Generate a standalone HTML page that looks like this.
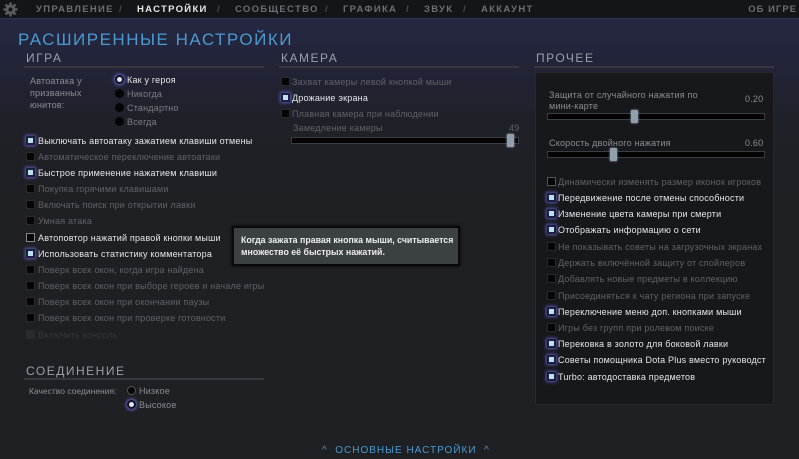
<!DOCTYPE html>
<html><head><meta charset="utf-8"><style>
*{margin:0;padding:0;box-sizing:border-box}
body{width:799px;height:459px;overflow:hidden;position:relative;font-family:"Liberation Sans","DejaVu Sans",sans-serif;background:linear-gradient(#262842 19px,#22243a 60px,#1f2128 120px,#1e2024 200px);color:#ccc}
.a{position:absolute;white-space:nowrap}
.top{position:absolute;left:0;top:0;width:799px;height:19px;background:#141518;border-bottom:1px solid #2e3550}
.nav{font-size:9.5px;letter-spacing:1.3px;color:#6b6e72;top:4px;font-weight:bold}
.sl{color:#4a4c50}
h2{position:absolute;font-weight:normal;letter-spacing:1.5px;color:#9aa0a8;font-size:12px}
.ln{position:absolute;height:2px;background:#34373c}
.cb{position:absolute;width:9px;height:9px;background:#050505;border:1px solid #2a2a2a}
.cb.on{background:#bfe0e8;border:2px solid #1c2040;box-shadow:0 0 3px 1px #5a5ab0}
.t{position:absolute;font-size:9px;letter-spacing:.2px;white-space:nowrap;color:#5f6266}
.t.w{color:#e4e6e8}
.t.m{color:#8a8d92}
.rd{position:absolute;width:9px;height:9px;border-radius:50%;background:#050505}
.rd.on{background:#dfe4f0;border:2px solid #101020;box-shadow:0 0 3px 1px #6a6ad0}
.sl2{position:absolute;height:7px;background:#030303;border:1px solid #3a3d42}
.kn{position:absolute;width:7px;height:13px;background:#8fa0ac;border-radius:1px;box-shadow:0 0 2px #aac}
</style></head><body>
<div class="top"></div>
<svg class="a" style="left:3px;top:2px" width="15" height="15" viewBox="0 0 15 15"><circle cx="7.5" cy="7.5" r="5" fill="#5a5c60"/><g stroke="#5a5c60" stroke-width="2.5"><line x1="7.5" y1="0.5" x2="7.5" y2="14.5"/><line x1="0.5" y1="7.5" x2="14.5" y2="7.5"/><line x1="2.5" y1="2.5" x2="12.5" y2="12.5"/><line x1="12.5" y1="2.5" x2="2.5" y2="12.5"/></g><circle cx="7.5" cy="7.5" r="2" fill="#141518"/></svg>
<div class="a nav" style="left:36px">УПРАВЛЕНИЕ</div>
<div class="a nav sl" style="left:119px">/</div>
<div class="a nav" style="left:137px;color:#e8e8e8">НАСТРОЙКИ</div>
<div class="a nav sl" style="left:217px">/</div>
<div class="a nav" style="left:235px">СООБЩЕСТВО</div>
<div class="a nav sl" style="left:325px">/</div>
<div class="a nav" style="left:343px">ГРАФИКА</div>
<div class="a nav sl" style="left:406px">/</div>
<div class="a nav" style="left:424px">ЗВУК</div>
<div class="a nav sl" style="left:463px">/</div>
<div class="a nav" style="left:481px">АККАУНТ</div>
<div class="a nav" style="right:2px;letter-spacing:1px">ОБ ИГРЕ</div>

<div class="a" style="left:18px;top:30px;font-size:17px;letter-spacing:1.5px;color:#4a9ad0">РАСШИРЕННЫЕ НАСТРОЙКИ</div>
<h2 style="left:26px;top:51px">ИГРА</h2><div class="ln" style="left:24px;top:66px;width:240px"></div>
<h2 style="left:281px;top:51px">КАМЕРА</h2><div class="ln" style="left:279px;top:66px;width:240px"></div>
<h2 style="left:536px;top:51px">ПРОЧЕЕ</h2><div class="ln" style="left:534px;top:66px;width:240px"></div>

<div class="t m" style="left:30px;top:75px;line-height:12px;white-space:normal;width:70px">Автоатака у призванных юнитов:</div>
<div class="rd on" style="left:115px;top:75px"></div><div class="t w" style="left:127px;top:75px">Как у героя</div>
<div class="rd" style="left:115px;top:89px"></div><div class="t" style="left:127px;top:89px;color:#7a7d82">Никогда</div>
<div class="rd" style="left:115px;top:103px"></div><div class="t" style="left:127px;top:103px;color:#7a7d82">Стандартно</div>
<div class="rd" style="left:115px;top:117px"></div><div class="t" style="left:127px;top:117px;color:#7a7d82">Всегда</div>

<div class="cb on" style="left:26px;top:136px"></div><div class="t w" style="left:38px;top:136px">Выключать автоатаку зажатием клавиши отмены</div>
<div class="cb" style="left:26px;top:152px"></div><div class="t" style="left:38px;top:152px">Автоматическое переключение автоатаки</div>
<div class="cb on" style="left:26px;top:168px"></div><div class="t w" style="left:38px;top:168px">Быстрое применение нажатием клавиши</div>
<div class="cb" style="left:26px;top:184px"></div><div class="t" style="left:38px;top:184px">Покупка горячими клавишами</div>
<div class="cb" style="left:26px;top:200px"></div><div class="t" style="left:38px;top:200px">Включать поиск при открытии лавки</div>
<div class="cb" style="left:26px;top:216px"></div><div class="t" style="left:38px;top:216px">Умная атака</div>
<div class="cb" style="left:26px;top:233px;border-color:#888"></div><div class="t w" style="left:38px;top:233px">Автоповтор нажатий правой кнопки мыши</div>
<div class="cb on" style="left:26px;top:249px"></div><div class="t w" style="left:38px;top:249px">Использовать статистику комментатора</div>
<div class="cb" style="left:26px;top:265px"></div><div class="t" style="left:38px;top:265px">Поверх всех окон, когда игра найдена</div>
<div class="cb" style="left:26px;top:281px"></div><div class="t" style="left:38px;top:281px">Поверх всех окон при выборе героев и начале игры</div>
<div class="cb" style="left:26px;top:297px"></div><div class="t" style="left:38px;top:297px">Поверх всех окон при окончании паузы</div>
<div class="cb" style="left:26px;top:313px"></div><div class="t" style="left:38px;top:313px">Поверх всех окон при проверке готовности</div>
<div class="cb" style="left:26px;top:330px;background:#2a2b2e"></div><div class="t" style="left:38px;top:330px;color:#35373a">Включить консоль</div>

<h2 style="left:26px;top:364px">СОЕДИНЕНИЕ</h2><div class="ln" style="left:24px;top:378px;width:240px"></div>
<div class="t m" style="left:29px;top:386px;font-size:8.5px;letter-spacing:0">Качество соединения:</div>
<div class="rd" style="left:127px;top:386px;border:1px solid #555"></div><div class="t m" style="left:139px;top:386px">Низкое</div>
<div class="rd on" style="left:127px;top:400px"></div><div class="t m" style="left:139px;top:400px">Высокое</div>

<div class="cb" style="left:281px;top:77px"></div><div class="t" style="left:292px;top:77px">Захват камеры левой кнопкой мыши</div>
<div class="cb on" style="left:281px;top:93px"></div><div class="t w" style="left:292px;top:93px">Дрожание экрана</div>
<div class="cb" style="left:281px;top:109px"></div><div class="t" style="left:292px;top:109px">Плавная камера при наблюдении</div>
<div class="t" style="left:293px;top:123px">Замедление камеры</div>
<div class="t" style="left:509px;top:123px">49</div>
<div class="sl2" style="left:291px;top:137px;width:228px"></div>
<div class="kn" style="left:507px;top:134px"></div>

<div class="a" style="left:535px;top:72px;width:239px;height:333px;background:#17181b;border:1px solid #26282c"></div>
<div class="t m" style="left:549px;top:90px;width:175px;white-space:normal;line-height:11px">Защита от случайного нажатия по мини-карте</div>
<div class="t m" style="left:745px;top:94px">0.20</div>
<div class="sl2" style="left:547px;top:113px;width:218px"></div>
<div class="kn" style="left:631px;top:110px"></div>
<div class="t m" style="left:549px;top:138px">Скорость двойного нажатия</div>
<div class="t m" style="left:745px;top:138px">0.60</div>
<div class="sl2" style="left:547px;top:151px;width:218px"></div>
<div class="kn" style="left:610px;top:148px"></div>

<div class="cb" style="left:547px;top:177px;border-color:#555"></div><div class="t" style="left:558px;top:177px">Динамически изменять размер иконок игроков</div>
<div class="cb on" style="left:547px;top:193px"></div><div class="t w" style="left:558px;top:193px">Передвижение после отмены способности</div>
<div class="cb on" style="left:547px;top:209px"></div><div class="t w" style="left:558px;top:209px">Изменение цвета камеры при смерти</div>
<div class="cb on" style="left:547px;top:225px"></div><div class="t w" style="left:558px;top:225px">Отображать информацию о сети</div>
<div class="cb" style="left:547px;top:242px"></div><div class="t" style="left:558px;top:242px">Не показывать советы на загрузочных экранах</div>
<div class="cb" style="left:547px;top:258px"></div><div class="t" style="left:558px;top:258px">Держать включённой защиту от спойлеров</div>
<div class="cb" style="left:547px;top:274px"></div><div class="t" style="left:558px;top:274px">Добавлять новые предметы в коллекцию</div>
<div class="cb" style="left:547px;top:291px"></div><div class="t" style="left:558px;top:291px">Присоединяться к чату региона при запуске</div>
<div class="cb on" style="left:547px;top:307px"></div><div class="t w" style="left:558px;top:307px">Переключение меню доп. кнопками мыши</div>
<div class="cb" style="left:547px;top:323px"></div><div class="t" style="left:558px;top:323px">Игры без групп при ролевом поиске</div>
<div class="cb on" style="left:547px;top:339px"></div><div class="t w" style="left:558px;top:339px">Перековка в золото для боковой лавки</div>
<div class="cb on" style="left:547px;top:355px"></div><div class="t w" style="left:558px;top:355px;width:208px;overflow:hidden">Советы помощника Dota Plus вместо руководства</div>
<div class="cb on" style="left:547px;top:372px"></div><div class="t w" style="left:558px;top:372px">Turbo: автодоставка предметов</div>

<div class="a" style="left:232px;top:226px;width:228px;height:40px;background:#3b4041;border:2px solid #0a0a0a;box-shadow:0 0 3px #000"></div>
<div class="t" style="left:241px;top:234px;color:#eee;font-weight:bold;font-size:8.8px;letter-spacing:0;line-height:12px">Когда зажата правая кнопка мыши, считывается<br>множество её быстрых нажатий.</div>

<div class="a" style="left:322px;top:445px;font-size:10px;letter-spacing:1px;color:#4a9ad0">^&nbsp; ОСНОВНЫЕ НАСТРОЙКИ &nbsp;^</div>
</body></html>
